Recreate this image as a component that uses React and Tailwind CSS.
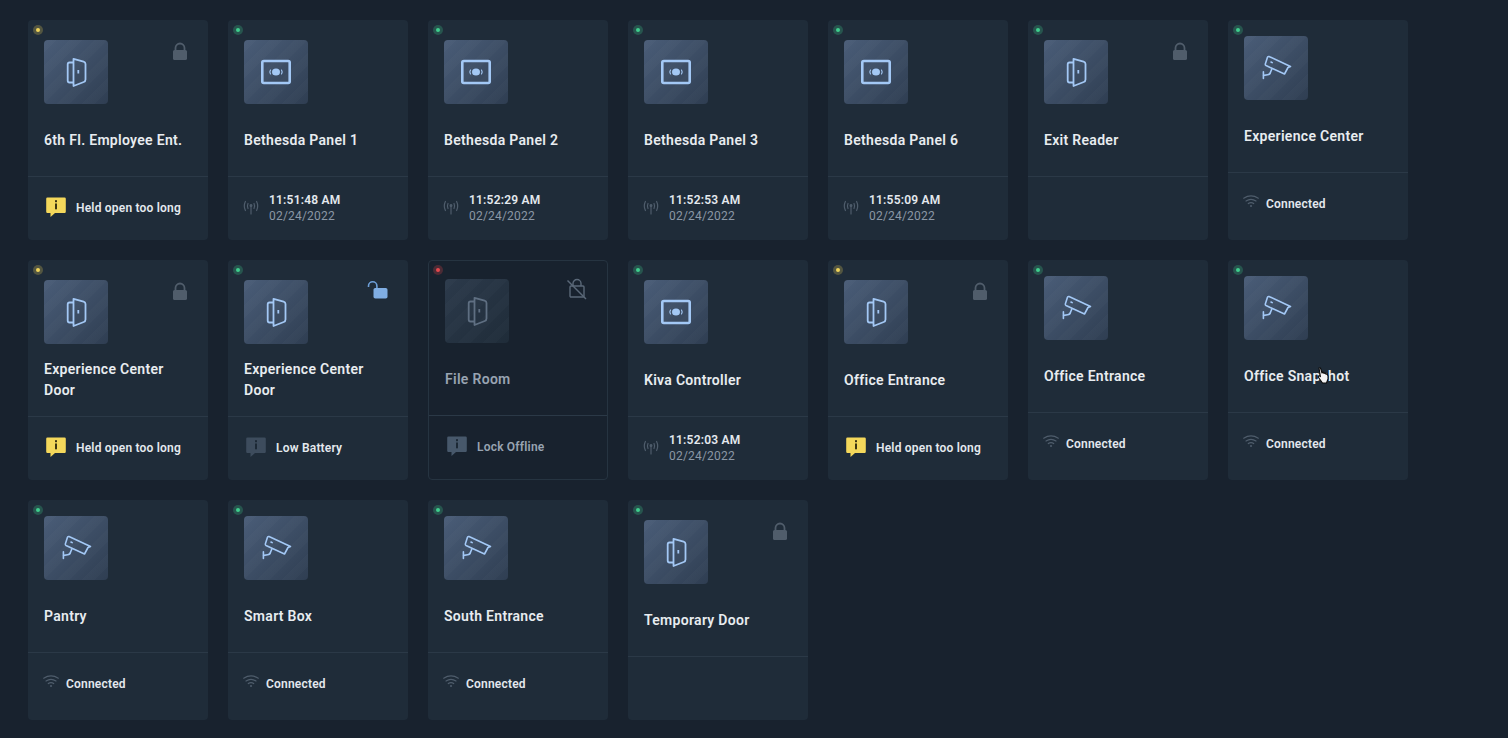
const FONT = "[font-family:Roboto,sans-serif]";

function Door({ dim }) {
  return (
    <svg width="64" height="64" viewBox="0 0 64 64" fill="none" stroke={dim ? "#5f6f82" : "#a3c8f5"} strokeWidth="1.8" strokeLinejoin="round">
      <path d="M29.5 18.8 L39.6 21.6 Q41.5 22.2 41.5 24 V39.6 Q41.5 41.4 39.8 42 L29.5 46 Z" />
      <path d="M29.5 22.5 H25.5 Q23.7 22.5 23.7 24.5 V40.5 Q23.7 42.5 25.5 42.5 H29.5" />
      <path d="M34.3 30 V33.4" strokeWidth="1.8" />
    </svg>
  );
}

function Panel() {
  return (
    <svg width="64" height="64" viewBox="0 0 64 64" fill="none" stroke="#a3c8f5">
      <rect x="18.3" y="21" width="27.4" height="22" rx="1.5" strokeWidth="2.6" />
      <ellipse cx="32" cy="32" rx="4" ry="3.6" fill="#a3c8f5" stroke="none" />
      <path d="M26.6 29.6 Q25 32 26.6 34.4 M37.4 29.6 Q39 32 37.4 34.4" strokeWidth="1.1" />
    </svg>
  );
}

function Camera() {
  return (
    <svg width="64" height="64" viewBox="0 0 64 64" fill="none" stroke="#a3c8f5" strokeWidth="1.6" strokeLinejoin="round" strokeLinecap="round">
      <path d="M25 20.5 L46.5 30.5 L44 31.5 L40.5 38 L22 29.5 Q21 29 21.4 27.8 L23.4 21.4 Q24 20.2 25 20.5 Z" />
      <path d="M27.8 33 L26.6 36 Q26 38.6 23.6 38.8 L19.6 39.4" />
      <path d="M19.4 35.8 V42.4" />
      <path d="M27 26 L28.2 26.6" />
    </svg>
  );
}

function Lock() {
  return (
    <svg width="16" height="20" viewBox="0 0 16 20" className="absolute top-[22px] right-[20px]">
      <path d="M3.5 9 V6 a4.5 4.5 0 0 1 9 0 V9" fill="none" stroke="#505d6b" strokeWidth="1.8" />
      <rect x="1" y="8" width="14" height="10" rx="1.6" fill="#505d6b" />
    </svg>
  );
}

function Unlock() {
  return (
    <svg width="22" height="20" viewBox="0 0 22 20" className="absolute top-[20px] right-[19px]">
      <path d="M1.5 7 V6 a4.2 4.2 0 0 1 8.4 0 V9" fill="none" stroke="#6d9fd8" strokeWidth="1.6" />
      <rect x="6.5" y="8" width="14" height="10.5" rx="1.8" fill="#80aee3" />
    </svg>
  );
}

function LockOff() {
  return (
    <svg width="22" height="22" viewBox="0 0 22 22" className="absolute top-[17px] right-[19px]" fill="none" stroke="#5a6878" strokeWidth="1.4">
      <path d="M7 8 V5.5 a4 4 0 0 1 8 0 V8" />
      <rect x="4" y="8" width="14" height="11" rx="1" />
      <path d="M1.5 2.5 L20 21" />
    </svg>
  );
}

function Info({ color, mark }) {
  return (
    <svg width="20" height="22" viewBox="0 0 20 22" className="shrink-0">
      <path d="M1.5 0.5 H18.5 Q19.8 0.5 19.8 1.8 V14.8 Q19.8 16 18.5 16 H9 L4.5 20 V16 H1.5 Q0.2 16 0.2 14.8 V1.8 Q0.2 0.5 1.5 0.5 Z" fill={color} />
      <rect x="9" y="3.2" width="2" height="2" fill={mark} />
      <rect x="9" y="6.5" width="2" height="5.8" fill={mark} />
    </svg>
  );
}

function Antenna() {
  return (
    <svg width="16" height="16" viewBox="0 0 16 16" fill="none" stroke="#4f5d6c" strokeWidth="1.2" strokeLinecap="round" className="shrink-0">
      <path d="M8 5.5 V14" />
      <circle cx="8" cy="5.5" r="0.9" fill="#4f5d6c" />
      <path d="M5 3.5 Q3.8 6 5 8.5 M11 3.5 Q12.2 6 11 8.5" />
      <path d="M2.4 1.5 Q0.2 6 2.4 10.5 M13.6 1.5 Q15.8 6 13.6 10.5" />
    </svg>
  );
}

function Wifi() {
  return (
    <svg width="16" height="13" viewBox="0 0 16 13" fill="none" stroke="#4f5d6c" strokeWidth="1.2" strokeLinecap="round" className="shrink-0 -mt-1">
      <path d="M0.7 3.2 Q8 -1.4 15.3 3.2" />
      <path d="M3 6 Q8 2.6 13 6" />
      <path d="M5.3 8.6 Q8 6.8 10.7 8.6" />
      <circle cx="8" cy="11" r="1" fill="#4f5d6c" stroke="none" />
    </svg>
  );
}

function Status({ item, dim }) {
  if (item.kind === "alert") {
    const off = item.tone !== "yellow";
    return (
      <div className="flex items-center gap-[10px] pl-[18px]">
        <Info color={off ? (dim ? "#47586b" : "#3d4c5d") : "#f4d85b"} mark={off ? "#1c2936" : "#3b3413"} />
        <span className={`text-[12px] leading-4 font-semibold tracking-[0.2px] ${dim ? "text-[#98a4b2]" : "text-[#e4e9ee]"}`}>{item.text}</span>
      </div>
    );
  }
  if (item.kind === "time") {
    return (
      <div className="flex items-center gap-[10px] pl-[15px]">
        <Antenna />
        <div className="text-[12px] leading-4 tracking-[0.2px]">
          <div className="font-semibold text-[#e4e9ee]">{item.time}</div>
          <div className="text-[#8b97a5]">02/24/2022</div>
        </div>
      </div>
    );
  }
  if (item.kind === "wifi") {
    return (
      <div className="flex items-center gap-[7px] pl-[15px] pb-[4px]">
        <Wifi />
        <span className="text-[12px] leading-4 font-semibold tracking-[0.2px] text-[#e4e9ee]">Connected</span>
      </div>
    );
  }
  return null;
}

function Card({ d }) {
  const dim = d.off;
  const dot = { y: ["bg-[#f0d45a]", "bg-[#f0d45a]/25"], g: ["bg-[#3fcf8e]", "bg-[#3fcf8e]/25"], r: ["bg-[#e5484d]", "bg-[#e5484d]/25"] }[d.dot];
  const pt = dim ? "pt-[18px]" : d.type === "camera" ? "pt-4" : "pt-5";
  return (
    <div className={`relative flex h-[220px] w-[180px] flex-col overflow-hidden rounded ${dim ? "border border-[#263441] bg-[#18222e]" : "bg-[#1f2c39]"}`}>
      <span className={`absolute flex h-[10px] w-[10px] items-center justify-center rounded-full ${dim ? "top-[4px] left-[4px]" : "top-[5px] left-[5px]"} ${dot[1]}`}>
        <span className={`h-1 w-1 rounded-full ${dot[0]}`} />
      </span>
      {d.lock === "on" && <Lock />}
      {d.lock === "open" && <Unlock />}
      {d.lock === "off" && <LockOff />}
      <div className={`flex min-h-0 flex-1 flex-col pl-4 ${pt}`}>
        <div className={`flex h-16 w-16 shrink-0 items-center justify-center rounded ${dim ? "bg-[repeating-linear-gradient(135deg,#ffffff04_0px,#ffffff04_9px,transparent_9px,transparent_18px),linear-gradient(135deg,#2c3a4b,#1f2c39)]" : "bg-[repeating-linear-gradient(135deg,#ffffff04_0px,#ffffff04_9px,transparent_9px,transparent_18px),linear-gradient(135deg,#4a5d78,#2f3e52)]"}`}>
          {d.type === "door" && <Door dim={dim} />}
          {d.type === "panel" && <Panel />}
          {d.type === "camera" && <Camera />}
        </div>
        <div className="flex flex-1 items-center pr-4">
          <div className={`text-[14px] leading-[21px] font-semibold tracking-[0.3px] ${dim ? "text-[#98a4b2]" : "text-[#e8ecf0]"}`}>{d.name}</div>
        </div>
      </div>
      <div className={`flex shrink-0 flex-col justify-center border-t border-[#2b3947] pb-[2px] ${d.type === "camera" ? "h-[68px]" : "h-16"}`}>
        {d.s && <Status item={d.s} dim={dim} />}
      </div>
    </div>
  );
}

const held = { kind: "alert", tone: "yellow", text: "Held open too long" };
const conn = { kind: "wifi" };
const cards = [
  { name: "6th Fl. Employee Ent.", type: "door", dot: "y", lock: "on", s: held },
  { name: "Bethesda Panel 1", type: "panel", dot: "g", s: { kind: "time", time: "11:51:48 AM" } },
  { name: "Bethesda Panel 2", type: "panel", dot: "g", s: { kind: "time", time: "11:52:29 AM" } },
  { name: "Bethesda Panel 3", type: "panel", dot: "g", s: { kind: "time", time: "11:52:53 AM" } },
  { name: "Bethesda Panel 6", type: "panel", dot: "g", s: { kind: "time", time: "11:55:09 AM" } },
  { name: "Exit Reader", type: "door", dot: "g", lock: "on" },
  { name: "Experience Center", type: "camera", dot: "g", s: conn },
  { name: "Experience Center Door", type: "door", dot: "y", lock: "on", s: held },
  { name: "Experience Center Door", type: "door", dot: "g", lock: "open", s: { kind: "alert", tone: "gray", text: "Low Battery" } },
  { name: "File Room", type: "door", dot: "r", lock: "off", off: true, s: { kind: "alert", tone: "gray", text: "Lock Offline" } },
  { name: "Kiva Controller", type: "panel", dot: "g", s: { kind: "time", time: "11:52:03 AM" } },
  { name: "Office Entrance", type: "door", dot: "y", lock: "on", s: held },
  { name: "Office Entrance", type: "camera", dot: "g", s: conn },
  { name: "Office Snapshot", type: "camera", dot: "g", s: conn },
  { name: "Pantry", type: "camera", dot: "g", s: conn },
  { name: "Smart Box", type: "camera", dot: "g", s: conn },
  { name: "South Entrance", type: "camera", dot: "g", s: conn },
  { name: "Temporary Door", type: "door", dot: "g", lock: "on" },
];

export default function App() {
  return (
    <div className={`relative min-h-[738px] bg-[#18222e] pt-5 pl-7 ${FONT}`}>
      <div className="grid grid-cols-[repeat(7,180px)] gap-5">
        {cards.map((d, i) => <Card key={i} d={d} />)}
      </div>
      <svg width="12" height="17" viewBox="0 0 12 17" className="absolute top-[367px] left-[1317px]">
        <path d="M2 1 Q3 0.3 3.6 1.4 L5 6 L6 5 L7 6.5 L8.2 5.8 L9 7.2 L10.2 7 L11 9 V12 L9.5 16 H5.5 L1.2 10 L2 8.6 L3.4 9.6 Z" fill="#f4f4f4" stroke="#0b0b0b" strokeWidth="1.1" strokeLinejoin="round" />
      </svg>
    </div>
  );
}
